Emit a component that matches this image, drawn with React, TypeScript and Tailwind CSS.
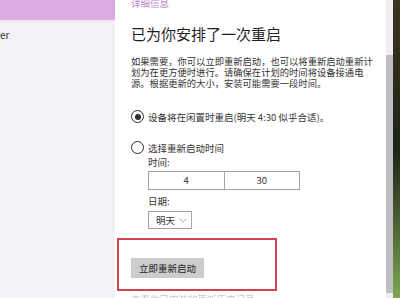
import React from 'react';

const font = { fontFamily: '"Noto Sans CJK SC", "Liberation Sans", sans-serif' };

function Radio({ checked }: { checked?: boolean }) {
  return (
    <span className="flex h-[13px] w-[13px] shrink-0 items-center justify-center rounded-full border-[1.5px] border-[#2f2a33]">
      {checked && <span className="h-[6px] w-[6px] rounded-full bg-[#2f2a33]" />}
    </span>
  );
}

export default function App() {
  return (
    <div className="flex h-[298px] w-[400px] overflow-hidden bg-white text-[#222]" style={font}>
      {/* Sidebar */}
      <div className="flex w-[115px] shrink-0 flex-col bg-[#f3f1f6]">
        <div className="h-[20px] bg-[#dcaae2]" />
        <div className="h-[2px] bg-[#ece6ef]" />
        <div className="mt-[7px] text-[10px] leading-[12px] text-[#333]">er</div>
      </div>

      {/* Main */}
      <div className="flex flex-1 flex-col pl-[16px]">
        <div className="-mt-[3px] text-[9.5px] leading-[12px] text-[#b985c8]">详细信息</div>

        <div className="mt-[15px] text-[15px] leading-[20px] text-[#1f1f1f]">已为你安排了一次重启</div>

        <div className="mt-[12px] flex flex-col text-[9.3px] leading-[11px] whitespace-nowrap text-[#333]">
          <span>如果需要，你可以立即重新启动，也可以将重新启动重新计</span>
          <span>划为在更方便时进行。请确保在计划的时间将设备接通电</span>
          <span>源。根据更新的大小，安装可能需要一段时间。</span>
        </div>

        <div className="mt-[21px] flex items-center">
          <Radio checked />
          <span className="ml-[4px] text-[9.5px] leading-[12px] text-[#333]">设备将在闲置时重启(明天 4:30 似乎合适)。</span>
        </div>

        <div className="mt-[18px] flex items-center">
          <Radio />
          <span className="ml-[4px] text-[9.5px] leading-[12px] text-[#333]">选择重新启动时间</span>
        </div>

        <div className="ml-[17px] flex flex-col">
          <div className="mt-[2px] text-[9.5px] leading-[12px] text-[#333]">时间:</div>
          <div className="mt-[3px] flex h-[19px] w-[152px] border border-[#a3a3a3] text-[9.5px] text-[#333]">
            <div className="flex flex-1 items-center justify-center border-r border-[#a3a3a3]">4</div>
            <div className="flex flex-1 items-center justify-center">30</div>
          </div>
          <div className="mt-[5px] text-[9.5px] leading-[12px] text-[#333]">日期:</div>
          <div className="mt-[4px] flex h-[18px] w-[44px] items-center border border-[#a3a3a3] pl-[7px] text-[9.5px] text-[#333]">
            明天
            <svg className="ml-[4px]" width="8" height="5" viewBox="0 0 8 5">
              <path d="M0.5 0.5 L4 4 L7.5 0.5" fill="none" stroke="#999" strokeWidth="0.8" />
            </svg>
          </div>
        </div>

        <div className="-ml-[14px] mt-[9px] flex h-[53px] w-[160px] shrink-0 items-end border-2 border-[#d5414f] pb-[11px] pl-[12px]">
          <button className="h-[20px] bg-[#cccccc] px-[8px] text-[9.5px] leading-[20px] text-[#222]">立即重新启动</button>
        </div>

        <div className="mt-[2px] text-[9.5px] leading-[12px] text-[#c8c8c8]">查看你已安装的更新历史记录</div>
      </div>

      {/* Scrollbar */}
      <div className="flex w-[7px] shrink-0 flex-col bg-[#f1edf3]">
        <div className="mt-[55px] h-[238px] bg-[#c0bdc4]" />
      </div>

      {/* Desktop edge */}
      <div className="w-[7px] shrink-0 bg-gradient-to-b from-[#3c3322] via-[#1d2418] to-[#7fa852]" />
    </div>
  );
}
